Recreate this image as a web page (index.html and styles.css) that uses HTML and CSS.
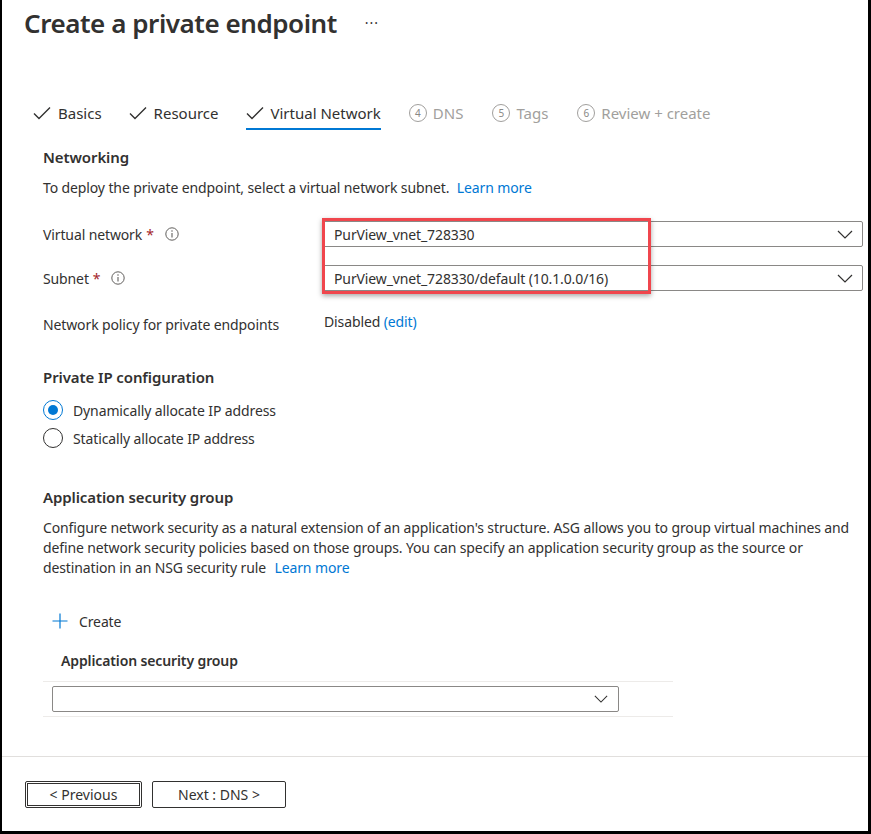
FILE: index.html
```html
<!DOCTYPE html>
<html>
<head>
<meta charset="utf-8">
<link rel="stylesheet" href="styles.css">
</head>
<body>
<div class="frame">
  <div class="main">
    <div class="title-row">
      <h1 class="title">Create a private endpoint</h1>
      <span class="more">···</span>
    </div>

    <div class="tabs">
      <div class="tab done">
        <svg class="check" viewBox="0 0 18 14" width="18" height="14"><path d="M1 7.5 L6 12.5 L17 1.5" fill="none" stroke="#323130" stroke-width="1.4"/></svg>
        <span>Basics</span>
      </div>
      <div class="tab done">
        <svg class="check" viewBox="0 0 18 14" width="18" height="14"><path d="M1 7.5 L6 12.5 L17 1.5" fill="none" stroke="#323130" stroke-width="1.4"/></svg>
        <span>Resource</span>
      </div>
      <div class="tab done active">
        <svg class="check" viewBox="0 0 18 14" width="18" height="14"><path d="M1 7.5 L6 12.5 L17 1.5" fill="none" stroke="#323130" stroke-width="1.4"/></svg>
        <span>Virtual Network</span>
      </div>
      <div class="tab todo"><span class="num">4</span><span>DNS</span></div>
      <div class="tab todo"><span class="num">5</span><span>Tags</span></div>
      <div class="tab todo"><span class="num">6</span><span>Review + create</span></div>
    </div>

    <div class="form">
      <h2 class="section-title">Networking</h2>
      <p class="desc">To deploy the private endpoint, select a virtual network subnet. <a class="link">Learn more</a></p>

      <div class="field vn">
        <div class="label">Virtual network <span class="req">*</span>
          <svg class="info" viewBox="0 0 14 14" width="14" height="14"><circle cx="7" cy="7" r="6.2" fill="none" stroke="#605e5c" stroke-width="1"/><line x1="7" y1="6" x2="7" y2="10.5" stroke="#605e5c" stroke-width="1.1"/><circle cx="7" cy="4.1" r="0.75" fill="#605e5c"/></svg>
        </div>
        <div class="select"><span>PurView_vnet_728330</span>
          <svg class="chev" viewBox="0 0 16 9" width="16" height="9"><path d="M1 1 L8 8 L15 1" fill="none" stroke="#323130" stroke-width="1.2"/></svg>
        </div>
      </div>

      <div class="field sn">
        <div class="label">Subnet <span class="req">*</span>
          <svg class="info" viewBox="0 0 14 14" width="14" height="14"><circle cx="7" cy="7" r="6.2" fill="none" stroke="#605e5c" stroke-width="1"/><line x1="7" y1="6" x2="7" y2="10.5" stroke="#605e5c" stroke-width="1.1"/><circle cx="7" cy="4.1" r="0.75" fill="#605e5c"/></svg>
        </div>
        <div class="select"><span>PurView_vnet_728330/default (10.1.0.0/16)</span>
          <svg class="chev" viewBox="0 0 16 9" width="16" height="9"><path d="M1 1 L8 8 L15 1" fill="none" stroke="#323130" stroke-width="1.2"/></svg>
        </div>
      </div>

      <div class="highlight"></div>

      <div class="field policy">
        <div class="label">Network policy for private endpoints</div>
        <div class="value">Disabled <a class="link">(edit)</a></div>
      </div>

      <h2 class="section-title ip">Private IP configuration</h2>
      <div class="radio checked"><span class="dot"></span>Dynamically allocate IP address</div>
      <div class="radio"><span class="dot"></span>Statically allocate IP address</div>

      <h2 class="section-title asg">Application security group</h2>
      <p class="para">Configure network security as a natural extension of an application's structure. ASG allows you to group virtual machines and define network security policies based on those groups. You can specify an application security group as the source or destination in an NSG security rule <a class="link spaced">Learn more</a></p>

      <div class="create">
        <svg viewBox="0 0 16 16" width="16" height="16"><path d="M8 0.5 V15.5 M0.5 8 H15.5" stroke="#0078d4" stroke-width="1.2"/></svg>
        <span>Create</span>
      </div>

      <div class="table">
        <div class="th">Application security group</div>
        <div class="tr">
          <div class="select small"><span></span>
            <svg class="chev" viewBox="0 0 16 9" width="14" height="8"><path d="M1 1 L8 8 L15 1" fill="none" stroke="#323130" stroke-width="1.2"/></svg>
          </div>
        </div>
      </div>
    </div>
  </div>

  <div class="footer">
    <button class="btn focused">&lt; Previous</button>
    <button class="btn">Next : DNS &gt;</button>
  </div>
</div>
</body>
</html>
```

FILE: styles.css
```css
html, body {
  margin: 0;
  padding: 0;
  background: #fff;
}
body {
  font-family: "Noto Sans", "Open Sans", sans-serif;
  color: #323130;
  font-size: 14px;
  letter-spacing: -0.12px;
}
.frame {
  box-sizing: border-box;
  width: 871px;
  height: 834px;
  border-left: 2px solid #000;
  border-right: 3px solid #000;
  border-bottom: 3px solid #000;
  display: flex;
  flex-direction: column;
}
.main {
  flex: 1;
}
.title-row {
  display: flex;
  align-items: center;
  padding-left: 22px;
  height: 45px;
}
.title {
  margin: 0;
  font-size: 26px;
  font-weight: 600;
  letter-spacing: -0.45px;
  color: #323130;
}
.more {
  margin-left: 28px;
  font-size: 14px;
  color: #323130;
  letter-spacing: 1px;
}
.tabs {
  display: flex;
  margin-top: 53px;
  padding-left: 31px;
  height: 34px;
  align-items: stretch;
}
.tab {
  display: flex;
  align-items: center;
  margin-right: 27px;
  font-size: 15px;
  position: relative;
  height: 30px;
  letter-spacing: 0;
}
.tab .check {
  margin-right: 7px;
}
.tab.active {
  margin-right: 28px;
}
.tab.active::after {
  content: "";
  position: absolute;
  left: 0;
  right: 0;
  bottom: -2px;
  height: 2px;
  background: #0078d4;
}
.tab.todo {
  color: #a19f9d;
  margin-right: 29px;
}
.tab.todo .num {
  box-sizing: border-box;
  width: 18px;
  height: 18px;
  border: 1px solid #a19f9d;
  border-radius: 50%;
  font-size: 10px;
  display: flex;
  align-items: center;
  justify-content: center;
  margin-right: 6px;
  color: #8a8886;
}
.form {
  position: relative;
  padding: 0 5px 0 41px;
}
.section-title {
  margin: 0;
  font-size: 15px;
  font-weight: 600;
  line-height: 20px;
  letter-spacing: -0.1px;
}
.form > .section-title:first-child {
  margin-top: 15px;
}
.desc {
  margin: 11px 0 0;
  line-height: 20px;
}
.link {
  color: #0078d4;
  text-decoration: none;
}
.desc .link {
  margin-left: 4px;
}
.link.spaced {
  margin-left: 5px;
}
.field {
  display: flex;
  align-items: center;
}
.field.vn {
  margin-top: 23px;
}
.field.sn {
  margin-top: 18px;
}
.label {
  width: 279px;
  flex: none;
  display: flex;
  align-items: center;
}
.req {
  color: #a4262c;
  margin-left: 4px;
}
.info {
  margin-left: 11px;
}
.select {
  box-sizing: border-box;
  flex: 1;
  height: 26px;
  border: 1px solid #8a8886;
  border-radius: 2px;
  display: flex;
  align-items: center;
  justify-content: space-between;
  padding: 0 9px 0 11px;
}
.highlight {
  position: absolute;
  left: 320px;
  top: 71px;
  width: 329px;
  height: 76px;
  box-sizing: border-box;
  border: 3px solid #f0464d;
  box-shadow: 0 2px 5px rgba(0, 0, 0, 0.35);
  pointer-events: none;
}
.field.policy {
  margin-top: 21px;
  align-items: flex-start;
}
.policy .label {
  padding-top: 3px;
}
.value {
  padding-left: 2px;
}
.section-title.ip {
  margin-top: 33px;
}
.radio {
  display: flex;
  align-items: center;
  height: 20px;
  margin-top: 13px;
}
.radio + .radio {
  margin-top: 8px;
}
.radio .dot {
  box-sizing: border-box;
  width: 20px;
  height: 20px;
  border: 1px solid #323130;
  border-radius: 50%;
  margin-right: 10px;
  position: relative;
}
.radio.checked .dot {
  border-color: #0078d4;
}
.radio.checked .dot::after {
  content: "";
  position: absolute;
  left: 4px;
  top: 4px;
  width: 10px;
  height: 10px;
  border-radius: 50%;
  background: #0078d4;
}
.section-title.asg {
  margin-top: 39px;
}
.para {
  margin: 11px 0 0;
  line-height: 20px;
  padding-right: 8px;
}
.create {
  display: flex;
  align-items: center;
  margin-top: 33px;
  margin-left: 9px;
  height: 20px;
}
.create svg {
  margin-right: 11px;
}
.table {
  width: 630px;
  margin-top: 20px;
}
.th {
  font-weight: 600;
  padding-left: 18px;
  height: 20px;
  line-height: 20px;
  border-bottom: 1px solid #edebe9;
  padding-bottom: 10px;
}
.tr {
  padding: 4px 54px 4px 9px;
  border-bottom: 1px solid #edebe9;
}
.select.small {
  padding-right: 10px;
}
.footer {
  border-top: 1px solid #e1dfdd;
  height: 74px;
  flex: none;
  display: flex;
  align-items: center;
  padding-left: 23px;
  gap: 10px;
}
.btn {
  box-sizing: border-box;
  height: 27px;
  background: #fff;
  border: 1px solid #323130;
  border-radius: 2px;
  font-family: inherit;
  font-size: 14px;
  color: #323130;
  padding: 0;
  margin-top: 0;
}
.btn.focused {
  width: 117px;
  outline: 1px solid #323130;
  outline-offset: -3px;
}
.btn:not(.focused) {
  width: 134px;
}
```
